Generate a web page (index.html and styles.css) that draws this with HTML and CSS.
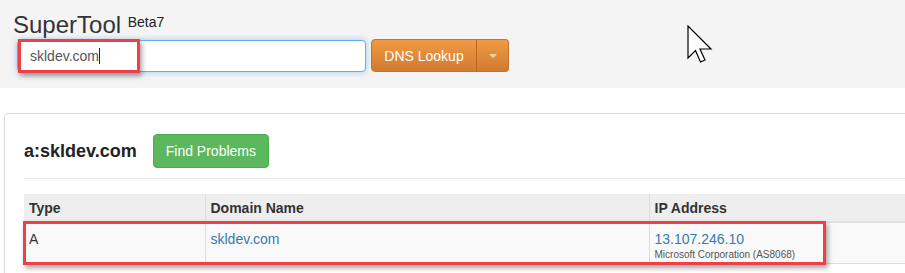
FILE: index.html
```html
<!DOCTYPE html>
<html lang="en">
<head>
    <meta charset="UTF-8">
    <title>SuperTool</title>
    <link rel="stylesheet" href="styles.css">
</head>
<body>
    <div class="topbar">
        <h1 class="brand">SuperTool <span class="beta">Beta7</span></h1>
        <div class="search-row">
            <div class="input-wrap">
                <input type="text" class="search-input" value="skldev.com">
                <span class="caret"></span>
                <div class="mark mark-input"></div>
            </div>
            <div class="btn-group">
                <button class="btn btn-warning">DNS Lookup</button>
                <button class="btn btn-warning btn-toggle"><span class="tri"></span></button>
            </div>
        </div>
        <!-- mouse pointer in the screenshot -->
        <svg class="pointer" width="26" height="40" viewBox="0 0 26 40">
            <path d="M1 1 L1 33 L8.5 25.5 L13.5 37 L18 35 L13 24 L24 24 Z" fill="#fff" stroke="#000" stroke-width="1.2" stroke-linejoin="miter"/>
        </svg>
    </div>

    <div class="panel">
        <div class="panel-head">
            <h2 class="query">a:skldev.com</h2>
            <button class="btn btn-success">Find Problems</button>
        </div>
        <div class="table-wrap">
            <table class="results">
                <thead>
                    <tr>
                        <th class="col-type">Type</th>
                        <th class="col-domain">Domain Name</th>
                        <th>IP Address</th>
                    </tr>
                </thead>
                <tbody>
                    <tr>
                        <td>A</td>
                        <td><a href="#">skldev.com</a></td>
                        <td>
                            <a href="#" class="ip">13.107.246.10</a>
                            <div class="asn">Microsoft Corporation (AS8068)</div>
                        </td>
                    </tr>
                </tbody>
            </table>
            <div class="mark mark-row"></div>
        </div>
    </div>
</body>
</html>
```

FILE: styles.css
```css
body {
    margin: 0;
    font-family: 'Liberation Sans', Arial, sans-serif;
    font-size: 14px;
    color: #333;
    background: #fff;
    overflow: hidden;
}
.topbar {
    position: relative;
    background: #f4f4f4;
    height: 88px;
    padding: 9px 0 0 13px;
    box-sizing: border-box;
}
.brand {
    margin: 0;
    font-size: 24px;
    font-weight: normal;
    line-height: 26px;
    color: #333;
}
.beta {
    font-size: 14px;
    vertical-align: 6px;
    color: #222;
}
.search-row {
    display: flex;
    align-items: flex-start;
    gap: 5px;
    margin: 1px 0 0 4px;
}
.input-wrap {
    position: relative;
}
.search-input {
    display: block;
    width: 349px;
    height: 32px;
    box-sizing: border-box;
    padding: 0 12px;
    font-family: inherit;
    font-size: 14px;
    color: #555;
    background: #fff;
    border: 1px solid #66afe9;
    border-radius: 4px;
    box-shadow: 0 0 6px rgba(102, 175, 233, 0.6);
    outline: none;
    margin-top: 1px;
}
.caret {
    position: absolute;
    left: 82px;
    top: 9px;
    width: 1px;
    height: 16px;
    background: #222;
}
.btn-group {
    display: flex;
}
.btn {
    font-family: inherit;
    font-size: 14px;
    color: #fff;
    border-radius: 4px;
    cursor: pointer;
    padding: 0 12px;
}
.btn-warning {
    height: 33px;
    background: linear-gradient(#f29a44, #cf7b30);
    border: 1px solid #c77226;
    border-radius: 4px 0 0 4px;
    width: 106px;
}
.btn-toggle {
    width: 33px;
    border-left: 1px solid #b8681f;
    border-radius: 0 4px 4px 0;
    margin-left: -1px;
    padding: 0;
    display: flex;
    align-items: center;
    justify-content: center;
}
.tri {
    width: 0;
    height: 0;
    border-left: 4px solid transparent;
    border-right: 4px solid transparent;
    border-top: 4px solid #f6d3b0;
}
.pointer {
    position: absolute;
    left: 687px;
    top: 25px;
}
.mark {
    position: absolute;
    border: 3px solid #ef3f47;
    box-shadow: 2px 3px 5px rgba(0, 0, 0, 0.35);
    pointer-events: none;
}
.mark-input {
    left: 1px;
    top: 0;
    width: 116px;
    height: 28px;
}
.panel {
    margin: 25px -40px 0 4px;
    border: 1px solid #ddd;
    border-radius: 4px;
    padding: 0 0 20px 19px;
    background: #fff;
}
.panel-head {
    display: flex;
    align-items: center;
    gap: 16px;
    padding: 20px 0 10px;
    border-bottom: 1px solid #e8e8e8;
}
.query {
    margin: 0;
    font-size: 18px;
    font-weight: bold;
    color: #222;
}
.btn-success {
    height: 34px;
    background: #5cb85c;
    border: 1px solid #4cae4c;
    font-size: 14px;
    padding: 0 12px;
}
.table-wrap {
    position: relative;
    margin-top: 15px;
}
.results {
    width: 100%;
    border-collapse: collapse;
}
.results th {
    background: #eee;
    text-align: left;
    font-weight: bold;
    height: 28px;
    padding: 0 5px;
    box-sizing: border-box;
    border-left: 1px solid #ddd;
    border-bottom: 2px solid #e2e2e2;
}
.results td {
    background: #f9f9f9;
    vertical-align: top;
    padding: 8px 5px 0;
    height: 41px;
    box-sizing: border-box;
    border-left: 1px solid #ddd;
    border-bottom: 1px solid #ddd;
}
.results th:first-child,
.results td:first-child {
    border-left: none;
}
.col-type {
    width: 181px;
}
.col-domain {
    width: 444px;
}
.results a {
    color: #337ab7;
    text-decoration: none;
}
.ip {
    font-size: 14px;
}
.asn {
    font-size: 10px;
    color: #555;
    margin-top: 2px;
}
.mark-row {
    left: -1px;
    top: 27px;
    width: 797px;
    height: 38px;
}
```
